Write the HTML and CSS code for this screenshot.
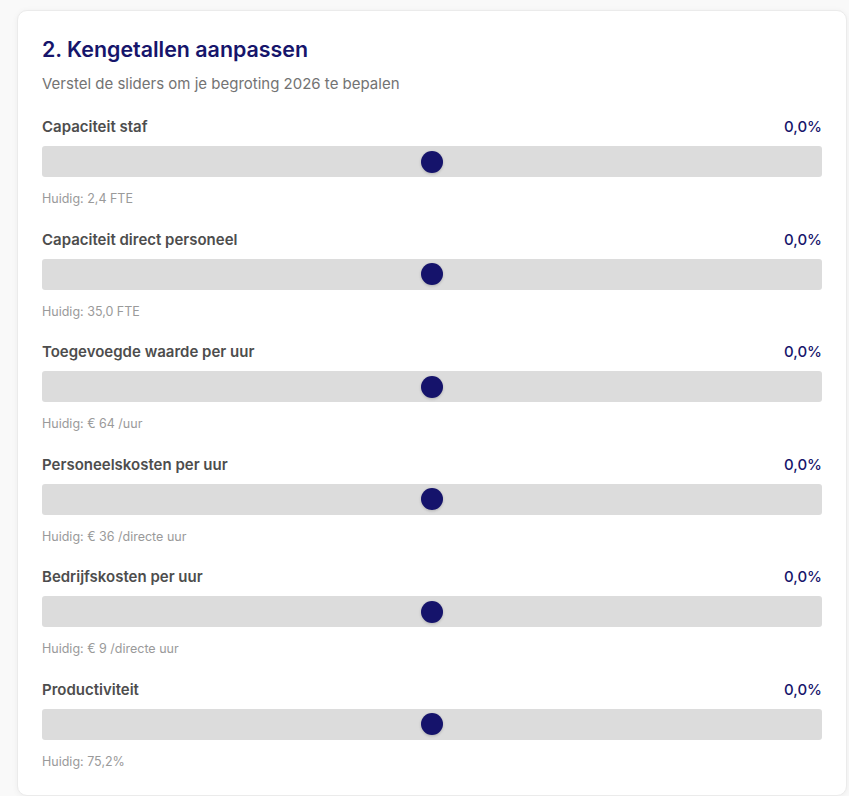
FILE: index.html
```html
<!DOCTYPE html>
<html lang="nl">
<head>
    <meta charset="UTF-8">
    <meta name="viewport" content="width=device-width, initial-scale=1.0">
    <title>Kengetallen aanpassen</title>
    <link rel="stylesheet" href="styles.css">
</head>
<body>
    <div class="card">
        <h2>2. Kengetallen aanpassen</h2>
        <p class="subtitle">Verstel de sliders om je begroting 2026 te bepalen</p>

        <div class="sliders">
            <div class="slider-row">
                <div class="slider-head">
                    <span class="label">Capaciteit staf</span>
                    <span class="value">0,0%</span>
                </div>
                <input type="range" min="-50" max="50" value="0">
                <div class="current">Huidig: 2,4 FTE</div>
            </div>

            <div class="slider-row">
                <div class="slider-head">
                    <span class="label">Capaciteit direct personeel</span>
                    <span class="value">0,0%</span>
                </div>
                <input type="range" min="-50" max="50" value="0">
                <div class="current">Huidig: 35,0 FTE</div>
            </div>

            <div class="slider-row">
                <div class="slider-head">
                    <span class="label">Toegevoegde waarde per uur</span>
                    <span class="value">0,0%</span>
                </div>
                <input type="range" min="-50" max="50" value="0">
                <div class="current">Huidig: € 64 /uur</div>
            </div>

            <div class="slider-row">
                <div class="slider-head">
                    <span class="label">Personeelskosten per uur</span>
                    <span class="value">0,0%</span>
                </div>
                <input type="range" min="-50" max="50" value="0">
                <div class="current">Huidig: € 36 /directe uur</div>
            </div>

            <div class="slider-row">
                <div class="slider-head">
                    <span class="label">Bedrijfskosten per uur</span>
                    <span class="value">0,0%</span>
                </div>
                <input type="range" min="-50" max="50" value="0">
                <div class="current">Huidig: € 9 /directe uur</div>
            </div>

            <div class="slider-row">
                <div class="slider-head">
                    <span class="label">Productiviteit</span>
                    <span class="value">0,0%</span>
                </div>
                <input type="range" min="-50" max="50" value="0">
                <div class="current">Huidig: 75,2%</div>
            </div>
        </div>
    </div>
</body>
</html>
```

FILE: styles.css
```css
body {
    font-family: 'Inter', 'Noto Sans', sans-serif;
    margin: 0;
    padding: 10px 2px 0 17px;
    background-color: #f9f9f9;
}
.card {
    background-color: #fff;
    border: 1px solid #ebebeb;
    border-radius: 10px;
    box-shadow: 0 1px 6px rgba(0, 0, 0, 0.05);
    padding: 24px 24px 25px 24px;
}
h2 {
    margin: 0;
    font-size: 21.4px;
    line-height: 28px;
    font-weight: 600;
    color: #16156b;
}
.subtitle {
    margin: 11px 0 0 0;
    font-size: 15px;
    line-height: 20px;
    color: #737373;
}
.sliders {
    margin-top: 23px;
    display: flex;
    flex-direction: column;
    gap: 22.6px;
}
.slider-head {
    display: flex;
    justify-content: space-between;
    font-size: 15px;
    line-height: 20px;
    font-weight: 600;
}
.label {
    color: #4d4d4d;
}
.value {
    color: #16156b;
    font-weight: 500;
}
input[type="range"] {
    -webkit-appearance: none;
    appearance: none;
    display: block;
    width: 100%;
    height: 31px;
    margin: 9px 0 0 0;
    background-color: #dcdcdc;
    border-radius: 3px;
    outline: none;
}
input[type="range"]::-webkit-slider-thumb {
    -webkit-appearance: none;
    width: 22px;
    height: 22px;
    border-radius: 50%;
    background-color: #15136b;
    box-shadow: 0 1px 3px rgba(0, 0, 0, 0.2);
    cursor: pointer;
}
.current {
    margin-top: 14px;
    font-size: 12.5px;
    line-height: 16px;
    color: #9a9a9a;
}
```
